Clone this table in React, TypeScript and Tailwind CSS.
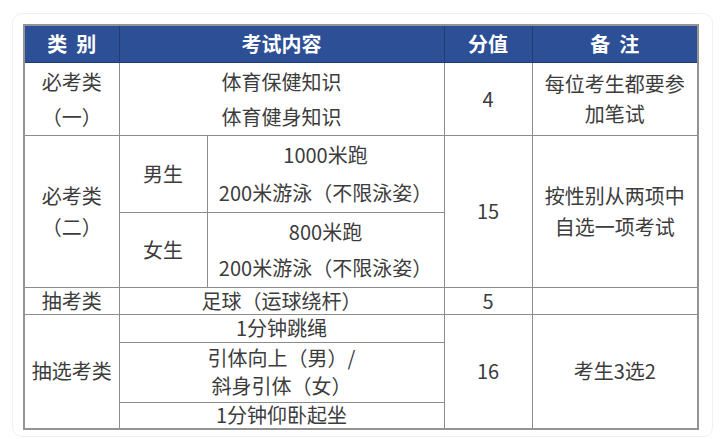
import React from "react";

const td = "border border-[#8c8c8c] p-0 text-center align-middle";
const th = "border border-[#1f3c78] bg-[#2c4f95] p-0 text-center align-middle text-white font-bold";

export default function App() {
  return (
    <div
      className="w-[722px] h-[439px] bg-white pt-[13px] pl-[12px] overflow-hidden"
      style={{ fontFamily: '"Noto Sans CJK SC", "Noto Sans", sans-serif' }}
    >
      <div className="w-[701px] h-[424px] border border-[#f0f0f0] rounded-[10px] pt-[10px] pl-[10px]">
        <table className="border-collapse table-fixed w-[674px] text-[20px] text-[#3c3c3c] leading-none border-2 border-[#949494]">
          <colgroup>
            <col className="w-[95px]" />
            <col className="w-[88px]" />
            <col className="w-[237px]" />
            <col className="w-[88px]" />
            <col className="w-[166px]" />
          </colgroup>
          <tbody>
            <tr className="h-[37px]">
              <th className={th}>类&nbsp;&nbsp;别</th>
              <th className={th} colSpan={2}>考试内容</th>
              <th className={th}>分值</th>
              <th className={th}>备&nbsp;&nbsp;注</th>
            </tr>
            <tr className="h-[73px]">
              <td className={td}>
                <div className="leading-[35px]">必考类</div>
                <div className="leading-[35px]">（一）</div>
              </td>
              <td className={td} colSpan={2}>
                <div className="leading-[35px]">体育保健知识</div>
                <div className="leading-[35px]">体育健身知识</div>
              </td>
              <td className={td}>4</td>
              <td className={td}>
                <div className="leading-[30px]">每位考生都要参</div>
                <div className="leading-[30px]">加笔试</div>
              </td>
            </tr>
            <tr className="h-[75px]">
              <td className={td} rowSpan={2}>
                <div className="leading-[31px]">必考类</div>
                <div className="leading-[31px]">（二）</div>
              </td>
              <td className={td}>男生</td>
              <td className={td}>
                <div className="leading-[38px]">1000米跑</div>
                <div className="leading-[38px]">200米游泳（不限泳姿）</div>
              </td>
              <td className={td} rowSpan={2}>15</td>
              <td className={td} rowSpan={2}>
                <div className="leading-[31px]">按性别从两项中</div>
                <div className="leading-[31px]">自选一项考试</div>
              </td>
            </tr>
            <tr className="h-[75px]">
              <td className={td}>女生</td>
              <td className={td}>
                <div className="leading-[36px]">800米跑</div>
                <div className="leading-[36px]">200米游泳（不限泳姿）</div>
              </td>
            </tr>
            <tr className="h-[27px]">
              <td className={td}>抽考类</td>
              <td className={td} colSpan={2}>足球（运球绕杆）</td>
              <td className={td}>5</td>
              <td className={td}></td>
            </tr>
            <tr className="h-[28px]">
              <td className={td} rowSpan={3}>抽选考类</td>
              <td className={td} colSpan={2}>1分钟跳绳</td>
              <td className={td} rowSpan={3}>16</td>
              <td className={td} rowSpan={3}>考生3选2</td>
            </tr>
            <tr className="h-[60px]">
              <td className={td} colSpan={2}>
                <div className="leading-[28px]">引体向上（男）/</div>
                <div className="leading-[28px]">斜身引体（女）</div>
              </td>
            </tr>
            <tr className="h-[27px]">
              <td className={td} colSpan={2}>1分钟仰卧起坐</td>
            </tr>
          </tbody>
        </table>
      </div>
    </div>
  );
}
